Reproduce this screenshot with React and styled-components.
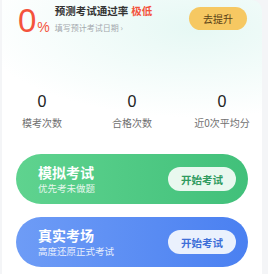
import React from 'react';
import styled, { createGlobalStyle } from 'styled-components';

const GlobalStyle = createGlobalStyle`
  html, body {
    margin: 0;
    padding: 0;
    background: #f4f5f7;
    font-family: "Noto Sans CJK SC", "Noto Sans", sans-serif;
  }
`;

const Card = styled.div`
  width: 260px;
  height: 274px;
  margin-left: 2px;
  box-sizing: border-box;
  border-radius: 0 10px 0 0;
  background:
    radial-gradient(ellipse 220px 90px at 75% 10%, #e6f8f4 0%, rgba(236, 250, 247, 0.6) 55%, rgba(255, 255, 255, 0) 100%),
    #ffffff;
  padding: 0 14px 0 14px;
  display: flex;
  flex-direction: column;
`;

const Header = styled.div`
  display: flex;
  align-items: center;
  height: 38px;
  padding-top: 1px;
`;

const Rate = styled.div`
  display: flex;
  align-items: baseline;
  color: #f4533c;
  margin-left: 2px;
  .num {
    font-family: "Liberation Sans", Arial, sans-serif;
    font-size: 33px;
    font-weight: 300;
    line-height: 1;
  }
  .pct {
    font-family: "Liberation Sans", Arial, sans-serif;
    font-size: 14px;
    margin-left: 1px;
  }
`;

const Info = styled.div`
  display: flex;
  flex-direction: column;
  margin-left: 5px;
  flex: 1;
  margin-top: -4px;
`;

const Title = styled.div`
  font-size: 10.5px;
  font-weight: 700;
  color: #333;
  line-height: 15px;
  span {
    color: #f4533c;
    margin-left: 3px;
  }
`;

const Hint = styled.div`
  font-size: 8px;
  color: #a4a8ad;
  line-height: 12px;
  margin-top: 4px;
`;

const Boost = styled.div`
  width: 58px;
  height: 23px;
  border-radius: 12px;
  background: #f6c862;
  color: #5b4318;
  font-size: 10px;
  display: flex;
  align-items: center;
  justify-content: center;
  margin-right: 1px;
  margin-top: -4px;
`;

const Stats = styled.div`
  display: grid;
  grid-template-columns: 90px 90px 90px;
  justify-content: center;
  margin-top: 54px;
`;

const Stat = styled.div`
  display: flex;
  flex-direction: column;
  align-items: center;
  .v {
    font-family: "Liberation Sans", Arial, sans-serif;
    font-size: 16px;
    color: #222;
    line-height: 18px;
  }
  .l {
    font-size: 10px;
    color: #707070;
    line-height: 14px;
    margin-top: 5px;
  }
`;

const Mode = styled.div`
  height: 50px;
  border-radius: 25px;
  background: ${(p) => p.$bg};
  display: flex;
  align-items: center;
  padding: 0 12px 0 22px;
  margin-top: ${(p) => p.$top}px;
`;

const ModeText = styled.div`
  flex: 1;
  display: flex;
  flex-direction: column;
  color: #fff;
  .t {
    font-size: 14px;
    font-weight: 700;
    line-height: 18px;
  }
  .s {
    font-size: 9.5px;
    line-height: 13px;
    opacity: 0.85;
    margin-top: 1px;
  }
`;

const Start = styled.div`
  width: 68px;
  height: 24px;
  border-radius: 12px;
  background: ${(p) => p.$bg};
  color: ${(p) => p.$color};
  font-size: 10.5px;
  font-weight: 700;
  display: flex;
  align-items: center;
  justify-content: center;
`;

export default function App() {
  return (
    <>
      <GlobalStyle />
      <Card>
        <Header>
          <Rate>
            <span className="num">0</span>
            <span className="pct">%</span>
          </Rate>
          <Info>
            <Title>
              预测考试通过率<span>极低</span>
            </Title>
            <Hint>填写预计考试日期 ›</Hint>
          </Info>
          <Boost>去提升</Boost>
        </Header>
        <Stats>
          <Stat>
            <span className="v">0</span>
            <span className="l">模考次数</span>
          </Stat>
          <Stat>
            <span className="v">0</span>
            <span className="l">合格次数</span>
          </Stat>
          <Stat>
            <span className="v">0</span>
            <span className="l">近0次平均分</span>
          </Stat>
        </Stats>
        <Mode $top={24} $bg="linear-gradient(90deg, #5fd38f 0%, #41c07a 100%)">
          <ModeText>
            <span className="t">模拟考试</span>
            <span className="s">优先考未做题</span>
          </ModeText>
          <Start $bg="#e9f8ef" $color="#2f9b5f">开始考试</Start>
        </Mode>
        <Mode $top={13} $bg="linear-gradient(90deg, #6e9cf6 0%, #4a80f1 100%)">
          <ModeText>
            <span className="t">真实考场</span>
            <span className="s">高度还原正式考试</span>
          </ModeText>
          <Start $bg="#eaf1fd" $color="#3e6fd8">开始考试</Start>
        </Mode>
      </Card>
    </>
  );
}
